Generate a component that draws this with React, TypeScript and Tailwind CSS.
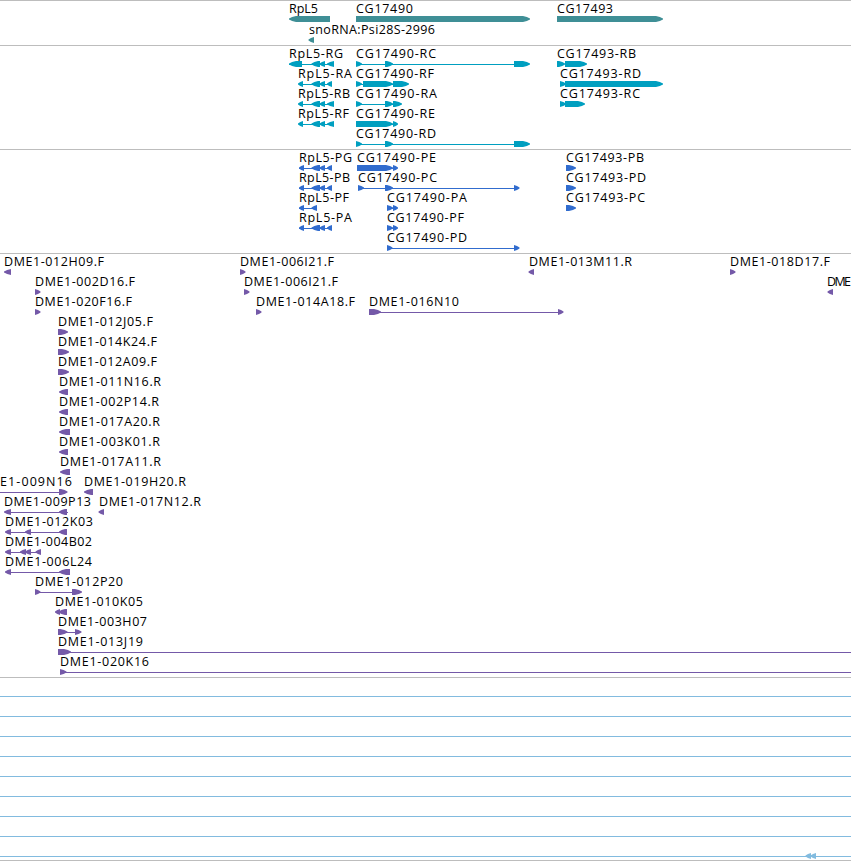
type Dir = 'l' | 'r'

// label: [text, start x, end x] — block: [start x, end x, direction]
interface Feature {
  label: [string, number, number]
  blocks: [number, number, Dir][]
  line?: [number, number]
}

interface Track {
  id: string
  color: string
  rows: Feature[][]
  className: string
}

const WIDTH = 851

function f(
  text: string,
  x1: number,
  x2: number,
  blocks: [number, number, Dir][],
  line?: [number, number]
): Feature {
  return { label: [text, x1, x2], blocks, line }
}

// ── Data ───────────────────────────────────────────────────────────────────────

const TRACKS: Track[] = [
  {
    id: 'genes',
    color: '#3f8f96',
    className: 'h-[45px] gap-px',
    rows: [
      [
        f('RpL5', 289, 318, [[289, 330, 'l']]),
        f('CG17490', 356, 413, [[356, 530, 'r']]),
        f('CG17493', 557, 613, [[557, 663, 'r']]),
      ],
      [f('snoRNA:Psi28S-2996', 309, 435, [[308.5, 314, 'l']])],
    ],
  },
  {
    id: 'transcripts',
    color: '#009fc0',
    className: 'h-[104px]',
    rows: [
      [
        f('RpL5-RG', 289, 343, [[289, 302, 'l'], [311.5, 320, 'l'], [319.5, 325, 'l'], [327, 334, 'l']], [289, 333]),
        f('CG17490-RC', 356, 436, [[356, 362, 'r'], [385, 393, 'r'], [514, 530, 'r']], [356, 515]),
        f('CG17493-RB', 557, 636, [[557, 565, 'r'], [565, 587, 'r']]),
      ],
      [
        f('RpL5-RA', 298, 352, [[298, 303, 'l'], [311.5, 320, 'l'], [319.5, 325, 'l'], [327, 332, 'l']], [299, 331]),
        f('CG17490-RF', 356, 434, [[356, 362, 'r'], [363, 393, 'r'], [393, 409, 'r']], [356, 400]),
        f('CG17493-RD', 560, 641, [[560, 566, 'r'], [565, 663, 'r']]),
      ],
      [
        f('RpL5-RB', 298, 350, [[298, 303, 'l'], [311.5, 320, 'l'], [319.5, 325, 'l'], [327, 334, 'l']], [299, 333]),
        f('CG17490-RA', 356, 437, [[356, 362, 'r'], [385, 393, 'r'], [393, 402, 'r']], [356, 400]),
        f('CG17493-RC', 560, 640, [[560, 566, 'r'], [565, 585, 'r']]),
      ],
      [
        f('RpL5-RF', 298, 349, [[298, 303, 'l'], [311.5, 320, 'l'], [319.5, 325, 'l'], [327, 334, 'l']], [299, 333]),
        f('CG17490-RE', 356, 435, [[356, 393, 'r'], [393, 398, 'r']], [357, 397]),
      ],
      [f('CG17490-RD', 356, 436, [[356, 362, 'r'], [385, 393, 'r'], [514, 530, 'r']], [356, 515])],
    ],
  },
  {
    id: 'proteins',
    color: '#316cce',
    className: 'h-[104px]',
    rows: [
      [
        f('RpL5-PG', 299, 352, [[299, 304, 'l'], [311.5, 320, 'l'], [319.5, 325, 'l'], [327, 332, 'l']], [299, 331]),
        f('CG17490-PE', 357, 436, [[357, 393, 'r'], [393, 398, 'r']], [358, 397]),
        f('CG17493-PB', 566, 644, [[566, 576, 'r']]),
      ],
      [
        f('RpL5-PB', 299, 350, [[299, 304, 'l'], [311.5, 320, 'l'], [319.5, 325, 'l'], [327, 332, 'l']], [299, 331]),
        f('CG17490-PC', 358, 437, [[358, 364, 'r'], [385, 393, 'r'], [514, 519.5, 'r']], [358, 518]),
        f('CG17493-PD', 566, 646, [[566, 576, 'r']]),
      ],
      [
        f('RpL5-PF', 299, 349, [[299, 304, 'l'], [311.5, 317, 'l']], [299, 316]),
        f('CG17490-PA', 387, 467, [[387, 393, 'r'], [393, 398, 'r']], [387, 397]),
        f('CG17493-PC', 566, 645, [[566, 576, 'r']]),
      ],
      [
        f('RpL5-PA', 299, 352, [[299, 304, 'l'], [311.5, 320, 'l'], [319.5, 325, 'l'], [327, 332, 'l']], [299, 331]),
        f('CG17490-PF', 387, 464, [[387, 393, 'r'], [393, 398, 'r']], [387, 397]),
      ],
      [f('CG17490-PD', 387, 467, [[387, 392.5, 'r'], [514, 519.5, 'r']], [387, 518])],
    ],
  },
  {
    id: 'clones',
    color: '#7459a8',
    className: 'h-[424px]',
    rows: [
      [
        f('DME1-012H09.F', 4, 104, [[4, 11, 'l']]),
        f('DME1-006I21.F', 240, 334, [[240, 245.5, 'r']]),
        f('DME1-013M11.R', 529, 632, [[528.5, 534, 'l']]),
        f('DME1-018D17.F', 730, 830, [[730, 735.5, 'r']]),
      ],
      [
        f('DME1-002D16.F', 35, 135, [[35, 40.5, 'r']]),
        f('DME1-006I21.F', 244, 338, [[244, 249.5, 'r']]),
        f('DME', 827, 851, [[827.5, 833, 'l']]),
      ],
      [
        f('DME1-020F16.F', 35, 132, [[35, 40.5, 'r']]),
        f('DME1-014A18.F', 256, 355, [[256, 261.5, 'r']]),
        f('DME1-016N10', 369, 459, [[369, 381, 'r'], [558, 563.5, 'r']], [369, 562]),
      ],
      [f('DME1-012J05.F', 58, 153, [[58, 68, 'r']])],
      [f('DME1-014K24.F', 58, 157, [[58, 69, 'r']])],
      [f('DME1-012A09.F', 58, 157, [[58, 69, 'r']])],
      [f('DME1-011N16.R', 59, 161, [[59, 68, 'l']])],
      [f('DME1-002P14.R', 59, 159, [[59, 68, 'l']])],
      [f('DME1-017A20.R', 59, 160, [[59, 70, 'l']])],
      [f('DME1-003K01.R', 59, 160, [[59, 68, 'l']])],
      [f('DME1-017A11.R', 60, 161, [[60, 70, 'l']])],
      [
        f('E1-009N16', 0, 72, [[59, 67.5, 'r']], [0, 66]),
        f('DME1-019H20.R', 84, 186, [[84, 93, 'l']]),
      ],
      [
        f('DME1-009P13', 4, 91, [[4, 11, 'l'], [59, 67, 'l']], [5, 68]),
        f('DME1-017N12.R', 99, 201, [[98.5, 104, 'l']]),
      ],
      [f('DME1-012K03', 5, 93, [[5, 11, 'l'], [25, 31, 'l'], [59, 67, 'l']], [6, 66])],
      [f('DME1-004B02', 5, 92, [[5, 11, 'l'], [20, 26, 'l'], [25, 31, 'l'], [35.5, 41, 'l']], [6, 40])],
      [f('DME1-006L24', 5, 92, [[5, 11, 'l'], [59, 70, 'l']], [6, 69])],
      [f('DME1-012P20', 35, 123, [[35, 40.5, 'r'], [72, 82, 'r']], [35, 80])],
      [f('DME1-010K05', 55, 143, [[55, 60, 'l'], [58.5, 67, 'l']], [56, 66])],
      [f('DME1-003H07', 58, 147, [[58, 67.5, 'r'], [75, 81.5, 'r']], [59, 80])],
      [f('DME1-013J19', 58, 143, [[58, 71, 'r']], [59, WIDTH])],
      [f('DME1-020K16', 60, 149, [[60, 66.5, 'r']], [60, WIDTH])],
    ],
  },
]

// ── Glyphs ─────────────────────────────────────────────────────────────────────

// Box with a blunt tapered end; short boxes collapse into a plain triangle
function arrowPoints(x1: number, x2: number, dir: Dir) {
  const w = x2 - x1
  const head = w > 7 ? Math.min(w - 2, 7) : w
  const tip = dir === 'r' ? x2 : x1
  const back = dir === 'r' ? x1 : x2
  const s = dir === 'r' ? -1 : 1
  const neck = tip + s * head
  const mid = tip + s * head * 0.45
  return `${back},15 ${neck},15 ${mid},16 ${tip},17.6 ${tip},18.6 ${mid},20 ${neck},21 ${back},21`
}

function FeatureGlyph({ feature }: { feature: Feature }) {
  const [text, x1, x2] = feature.label
  return (
    <g>
      {feature.line && (
        <rect x={feature.line[0]} y={18} width={feature.line[1] - feature.line[0]} height={1} />
      )}
      {feature.blocks.map(([a, b, dir], i) => (
        <polygon key={i} points={arrowPoints(a, b, dir)} />
      ))}
      <text x={x1} y={12} textLength={x2 - x1} fill="#000">{text}</text>
    </g>
  )
}

function TrackRow({ features, color }: { features: Feature[]; color: string }) {
  return (
    <svg
      width={WIDTH}
      height={22}
      fill={color}
      className="block shrink-0 -mb-0.5 overflow-hidden font-['Open_Sans','Noto_Sans',sans-serif] text-[12.5px]"
    >
      {features.map((feature, i) => <FeatureGlyph key={i} feature={feature} />)}
    </svg>
  )
}

// ── Page ───────────────────────────────────────────────────────────────────────

export default function App() {
  return (
    <main className="w-[851px] h-[861px] bg-white overflow-hidden flex flex-col">
      {TRACKS.map(track => (
        <section key={track.id} className={`shrink-0 flex flex-col border-t border-[#bdbdbd] ${track.className}`}>
          {track.rows.map((row, i) => <TrackRow key={i} features={row} color={track.color} />)}
        </section>
      ))}

      <section className="shrink-0 h-[184px] border-y border-[#bdbdbd]">
        {Array.from({ length: 9 }, (_, i) => (
          <svg key={i} width={WIDTH} height={20} fill="#82bbdf" className="block overflow-visible">
            <rect x={0} y={18} width={WIDTH} height={1} />
            {i === 8 && (
              <>
                <polygon points={arrowPoints(805.5, 811, 'l')} />
                <polygon points={arrowPoints(810.5, 816, 'l')} />
              </>
            )}
          </svg>
        ))}
      </section>
    </main>
  )
}
